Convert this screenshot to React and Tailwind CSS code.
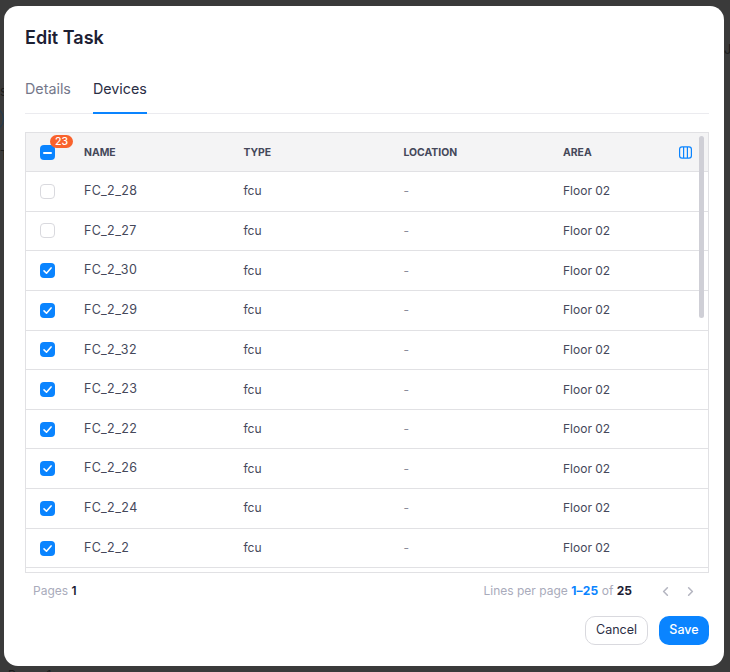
import React, { useState } from 'react';
import { ChevronLeft, ChevronRight } from 'lucide-react';

const devices = [
  { name: 'FC_2_28', checked: false },
  { name: 'FC_2_27', checked: false },
  { name: 'FC_2_30', checked: true },
  { name: 'FC_2_29', checked: true },
  { name: 'FC_2_32', checked: true },
  { name: 'FC_2_23', checked: true },
  { name: 'FC_2_22', checked: true },
  { name: 'FC_2_26', checked: true },
  { name: 'FC_2_24', checked: true },
  { name: 'FC_2_2', checked: true },
];

const Checkbox = ({ checked }) => (
  <span
    className={`flex h-[15px] w-[15px] items-center justify-center rounded-[4px] ${checked ? 'bg-[#0a84ff]' : 'border border-[#d9d9de] bg-white'}`}
  >
    {checked && (
      <svg width="11" height="11" viewBox="0 0 12 12" fill="none">
        <path d="M2.2 6.4 4.9 9l5-5.8" stroke="white" strokeWidth="1.7" strokeLinecap="round" strokeLinejoin="round" />
      </svg>
    )}
  </span>
);

const App = () => {
  const [tab, setTab] = useState('devices');

  return (
    <div className="relative h-[672px] w-[730px] overflow-hidden bg-[#3a3a3a] font-['Inter',sans-serif]">
      {/* page behind the overlay */}
      <span className="absolute left-0 top-[83px] text-[13px] leading-4 text-[#1c1c1c]">s</span>
      <span className="absolute left-[-22px] top-[106px] h-[26px] w-[26px] rounded-full border border-[#1f3a52]" />
      <span className="absolute left-0 top-[147px] text-[13px] leading-4 text-[#1c1c1c]">T</span>
      <span className="absolute left-[724px] top-[41px] text-[13px] leading-4 text-[#1c1c1c]">J</span>
      <span className="absolute left-[8px] top-[667px] text-[12px] leading-4 text-[#1c1c1c]">Pages 1</span>

      {/* modal */}
      <div className="absolute left-[4px] top-[6px] flex h-[660px] w-[720px] flex-col rounded-[14px] bg-white pl-[21px] pr-[15px]">
        <h2 className="pt-[20px] text-[18px] font-semibold leading-[24px] text-[#1c2033]">Edit Task</h2>

        <div className="mt-[20px] flex h-[44px] gap-[22px] border-b border-[#ebebef] text-[14.3px] leading-[20px]">
          <button onClick={() => setTab('details')} className={`h-[44px] border-b-2 px-0 pb-[15px] pt-[9px] ${tab === 'details' ? 'border-[#0a84ff] text-[#2a2e45]' : 'border-transparent text-[#74778a]'}`}>
            Details
          </button>
          <button onClick={() => setTab('devices')} className={`h-[44px] border-b-2 px-0 pb-[15px] pt-[9px] ${tab === 'devices' ? 'border-[#0a84ff] text-[#2a2e45]' : 'border-transparent text-[#74778a]'}`}>
            Devices
          </button>
        </div>

        {/* table */}
        <div className="relative mt-[18px] h-[441px] overflow-hidden border border-[#e1e1e4] text-[12px] text-[#45485a]">
          <div className="flex h-[39px] items-center border-b border-[#e1e1e4] bg-[#f4f4f5] pt-[1px] text-[10.4px] font-bold text-[#45485a]">
            <div className="relative flex w-[58px] justify-center pr-[16px]">
              <span className="flex h-[15px] w-[15px] items-center justify-center rounded-[4px] bg-[#0a84ff]">
                <span className="h-[2px] w-[9px] rounded bg-white" />
              </span>
              <span className="absolute left-[24px] top-[-10px] flex h-[13px] w-[23px] items-center justify-center rounded-full bg-[#f9622c] text-[10.5px] font-medium text-white">
                23
              </span>
            </div>
            <div className="w-[159.5px]">NAME</div>
            <div className="w-[160px]">TYPE</div>
            <div className="w-[159.5px]">LOCATION</div>
            <div className="flex-1">AREA</div>
            <svg className="absolute right-[16px] top-[13px]" width="13" height="13" viewBox="0 0 13 13" fill="none" stroke="#0a84ff" strokeWidth="1.2">
              <rect x="0.6" y="0.9" width="11.8" height="11.2" rx="2.4" />
              <path d="M4.6 1v11M8.4 1v11" />
            </svg>
          </div>

          {devices.map((d) => (
            <div key={d.name} className="flex h-[39.65px] items-center border-b border-[#e1e1e4]">
              <div className="flex w-[58px] justify-center pr-[16px]">
                <Checkbox checked={d.checked} />
              </div>
              <div className="w-[159.5px] text-[12.5px] tracking-[0.45px]">{d.name}</div>
              <div className="w-[160px]">fcu</div>
              <div className="w-[159.5px] text-[#8a8c9a]">-</div>
              <div className="flex-1">Floor 02</div>
            </div>
          ))}

          {/* scrollbar */}
          <span className="absolute right-[4px] top-[3px] h-[182px] w-[5px] rounded-full bg-[#cfcfd6]" />
        </div>

        {/* pagination */}
        <div className="flex h-[36px] items-center justify-between pl-[8px] pr-[11px] text-[12px] text-[#a9abbb]">
          <div>
            Pages <span className="font-semibold text-[#1c2033]">1</span>
          </div>
          <div className="flex items-center">
            <span>
              Lines per page <span className="font-bold tracking-[0.2px] text-[#0a84ff]">1–25</span> of <span className="font-bold text-[#1c2033]">25</span>
            </span>
            <ChevronLeft className="ml-[26px] text-[#b4b5c0]" size={15} strokeWidth={2.5} />
            <ChevronRight className="ml-[10px] text-[#b4b5c0]" size={15} strokeWidth={2.5} />
          </div>
        </div>

        {/* footer */}
        <div className="mt-[7px] flex justify-end gap-[11px] text-[12.5px]">
          <button className="h-[29px] w-[63px] rounded-[10px] border border-[#d9d9de] bg-white text-[#2a2e45]">Cancel</button>
          <button className="h-[29px] w-[50px] rounded-[10px] bg-[#0a84ff] font-medium text-white">Save</button>
        </div>
      </div>
    </div>
  );
};

export default App;
